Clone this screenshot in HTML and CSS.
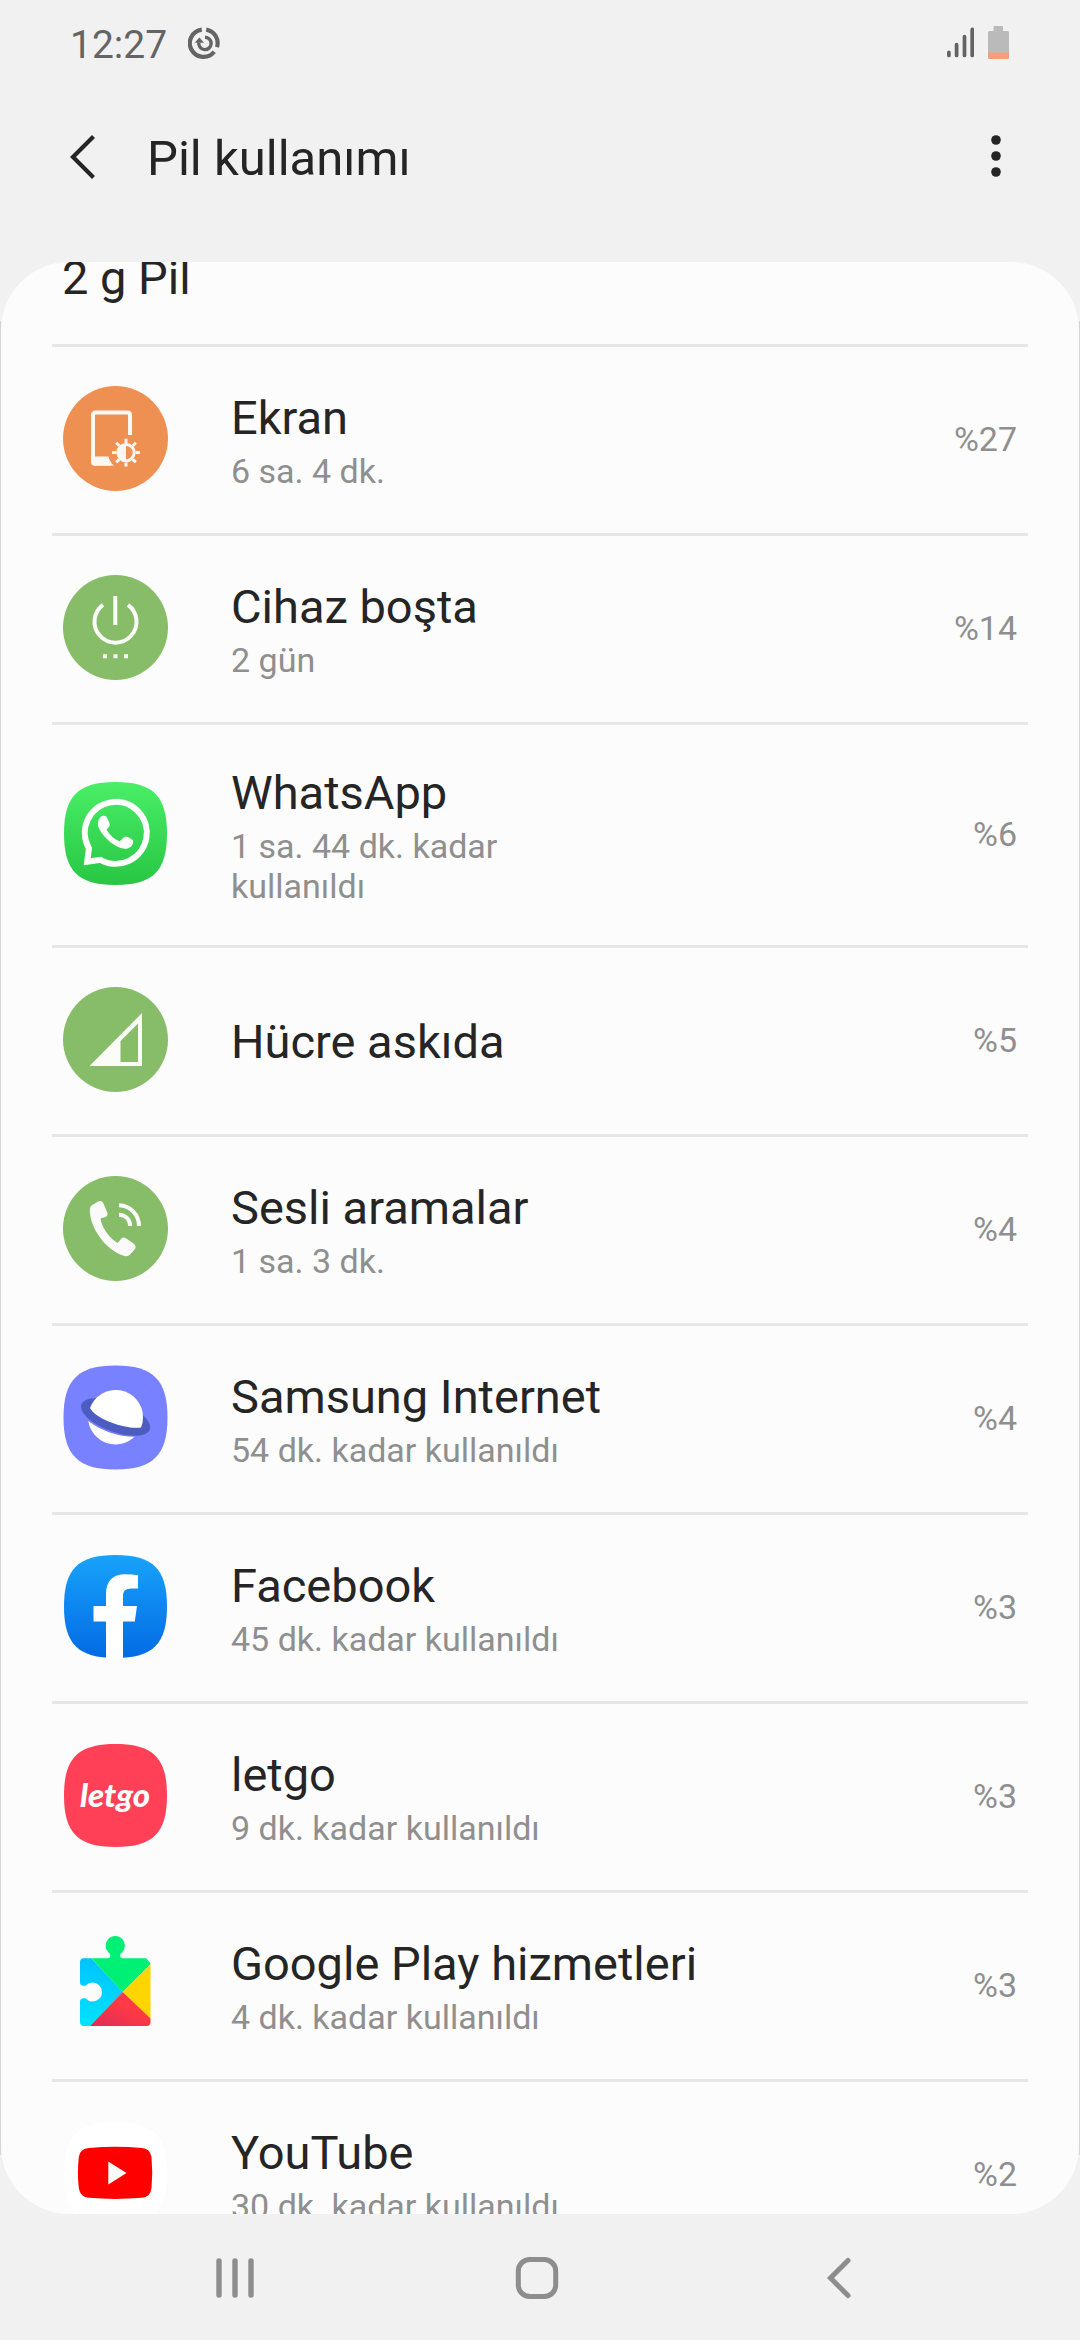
FILE: index.html
```html
<!DOCTYPE html>
<html lang="tr">
<head>
<meta charset="utf-8">
<title>Pil kullanımı</title>
<link rel="stylesheet" href="styles.css">
</head>
<body>
<div class="screen">
  <header class="status">
    <span class="clock">12:27</span>
    <svg class="status-sync" width="32" height="34" viewBox="0 0 32 34" fill="none" stroke="#646464" stroke-width="4.2">
      <path d="M18.2 2.6A13.7 13.7 0 0 1 29 20.2M26.2 24.8A13.7 13.7 0 1 1 13.8 2.6"/>
      <path d="M17 10.2A6.2 6.2 0 1 1 10.8 15.5" stroke-width="3.4"/>
      <path d="M6.8 15.8L11.4 10.4L16 15.8Z" fill="#646464" stroke="none"/>
    </svg>
    <svg class="signal" width="27" height="32" viewBox="0 0 27 32" stroke="#636363" stroke-width="3.7" stroke-linecap="round">
      <path d="M1.9 25.4V28.4M9.6 17.5V28.4M17.5 9.5V28.4M25.2 2.4V28.4"/>
    </svg>
    <svg class="battery" width="21" height="34" viewBox="0 0 21 34">
      <path d="M6.6 0H14.2Q15 0 15 1V5H19.5Q21 5 21 6.5V27H0V6.5Q0 5 1.5 5H5.6V1Q5.6 0 6.6 0Z" fill="#bababa"/>
      <path d="M0 26.5H21V31.5Q21 33 19.5 33H1.5Q0 33 0 31.5Z" fill="#f99b7d"/>
    </svg>
  </header>
  <div class="appbar">
    <svg class="back" width="26" height="44" viewBox="0 0 26 44" fill="none" stroke="#252525" stroke-width="4.2"><path d="M23.5 1.5L3 22L23.5 42.5"/></svg>
    <h1>Pil kullanımı</h1>
    <svg class="more" width="10" height="44" viewBox="0 0 10 44" fill="#252525"><circle cx="5" cy="6" r="4.8"/><circle cx="5" cy="22" r="4.8"/><circle cx="5" cy="38" r="4.8"/></svg>
  </div>
  <main class="content">
    <div class="card">
      <h2>2 g Pil</h2>
      <ul>
        <li class="row">
          <svg class="icon" viewBox="0 0 105 105">
            <circle cx="52.5" cy="52.5" r="52.5" fill="#ef9053"/>
            <path d="M67 49V29Q67 26.4 64.4 26.4H32.6Q30 26.4 30 29V76Q30 77.7 32 77.7H48" fill="none" stroke="#fbf7f3" stroke-width="4"/>
            <path d="M30 70.5H45.5Q46.5 76 51 79.6H32Q30 79.6 30 77Z" fill="#fbf7f3"/>
            <circle cx="63" cy="66.6" r="8.2" fill="none" stroke="#fbf7f3" stroke-width="3"/>
            <path d="M63 58.4A8.2 8.2 0 0 0 63 74.8Z" fill="#fbf7f3"/>
            <path d="M63 52.8V57M63 76.4V80.6M49.1 66.6H53.3M72.7 66.6H76.9M53.2 56.8L56.2 59.8M69.8 73.4L72.8 76.4M72.8 56.8L69.8 59.8M56.2 73.4L53.2 76.4" stroke="#fbf7f3" stroke-width="3"/>
          </svg>
          <div class="text"><h3>Ekran</h3><p>6 sa. 4 dk.</p></div><span class="pct">%27</span>
        </li>
        <li class="row">
          <svg class="icon" viewBox="0 0 105 105">
            <circle cx="52.5" cy="52.5" r="52.5" fill="#87bd68"/>
            <path d="M52.3 21V50M40 29.8A21 21 0 1 0 65 29.8" fill="none" stroke="#fafcf8" stroke-width="4"/>
            <path d="M40 79.2H44V83.2H40ZM50.5 79.2H54.5V83.2H50.5ZM61 79.2H65V83.2H61Z" fill="#fafcf8"/>
          </svg>
          <div class="text"><h3>Cihaz boşta</h3><p>2 gün</p></div><span class="pct">%14</span>
        </li>
        <li class="row">
          <svg class="icon" viewBox="0 0 105 105">
            <defs><linearGradient id="wa" x1="0" y1="0" x2="0" y2="1"><stop offset="0" stop-color="#49ee66"/><stop offset="1" stop-color="#28c644"/></linearGradient></defs>
            <path d="M52.5 1C90 1 104 15 104 52.5S90 104 52.5 104S1 90 1 52.5S15 1 52.5 1Z" fill="url(#wa)"/>
            <path d="M26 67.4A31 31 0 1 1 37.5 78.8L24.2 80.8Z" fill="none" stroke="#fff" stroke-width="6"/>
            <path d="M37 36.5C38.5 34.5 42 34.3 43.3 35.6C44.8 38 46.5 41.5 46.8 44C46.5 46.5 44 47 43.7 49C47 54.5 51.5 58.5 56.5 60.2C58.5 59.5 60.5 56 62.3 55.600C65 56 69.500 58.200 70.200 60.200C70.300 64.500 66.500 67.700 62 67.800C52 67 38 55 35 44.500C34.600 41.500 35.400 38.500 37 36.500Z" fill="#fff"/>
          </svg>
          <div class="text"><h3>WhatsApp</h3><p>1 sa. 44 dk. kadar kullanıldı</p></div><span class="pct">%6</span>
        </li>
        <li class="row">
          <svg class="icon" viewBox="0 0 105 105">
            <circle cx="52.5" cy="52.5" r="52.5" fill="#87bd68"/>
            <path d="M79 26V79H26.5ZM75 36.5L57.5 54V75H75Z" fill="#fafcf8" fill-rule="evenodd"/>
          </svg>
          <div class="text"><h3>Hücre askıda</h3></div><span class="pct">%5</span>
        </li>
        <li class="row">
          <svg class="icon" viewBox="0 0 105 105">
            <circle cx="52.5" cy="52.5" r="52.5" fill="#87bd68"/>
            <path d="M28.5 29.5L35.5 25.3Q38.6 24 40.2 27L44.3 36.5Q45.2 39.8 42.5 41L37.5 42.5C38.5 50.5 46 62 54.5 67L58.5 62.5Q60 60.8 62.5 62L70.5 67.5Q73.8 70 72 73L66.5 79Q63.5 81 60 79.6C42 73.5 26.5 51 26.8 33.5Q27 30.5 28.5 29.5Z" fill="#fafafa"/>
            <path d="M56 29.3C67.5 29.8 76 38.5 76 50M56 38.7C62.5 39 66.9 43.5 67.2 50" fill="none" stroke="#fafafa" stroke-width="4"/>
          </svg>
          <div class="text"><h3>Sesli aramalar</h3><p>1 sa. 3 dk.</p></div><span class="pct">%4</span>
        </li>
        <li class="row">
          <svg class="icon" viewBox="0 0 105 105">
            <path d="M52.5 .5C90 .5 104.5 15 104.5 52.5S90 104.5 52.5 104.5S.5 90 .5 52.5S15 .5 52.5 .5Z" fill="#7881ff"/>
            <ellipse cx="52.6" cy="52" rx="36.5" ry="15" transform="rotate(20 52.6 52)" fill="#4c5cc0"/>
            <path d="M27 43A27.3 27.3 0 0 1 80 52Q80 58.5 78 62.5C64 65 32 54 27 43Z" fill="#fff"/>
            <path d="M25.3 56C37 65.5 56 72 71.5 71.8A27.5 27.5 0 0 1 25.3 56Z" fill="#fff"/>
          </svg>
          <div class="text"><h3>Samsung Internet</h3><p>54 dk. kadar kullanıldı</p></div><span class="pct">%4</span>
        </li>
        <li class="row">
          <svg class="icon" viewBox="0 0 105 105">
            <defs><linearGradient id="fb" x1="0" y1="0" x2="0" y2="1"><stop offset="0" stop-color="#18a3fb"/><stop offset="1" stop-color="#036ae4"/></linearGradient></defs>
            <path d="M52.5 1C90 1 104 15 104 52.5S90 104 52.5 104S1 90 1 52.5S15 1 52.5 1Z" fill="url(#fb)"/>
            <path d="M43 104.5V67.5H30.5V52H43V40C43 27 50 20.3 62 20.3Q69 20.3 75 21.2V34.5H68.5C62 34.5 60 37.5 60 42V52H74L71.8 67.5H60V104.5Z" fill="#fff"/>
          </svg>
          <div class="text"><h3>Facebook</h3><p>45 dk. kadar kullanıldı</p></div><span class="pct">%3</span>
        </li>
        <li class="row">
          <svg class="icon" viewBox="0 0 105 105">
            <path d="M52.5 1C90 1 104 15 104 52.5S90 104 52.5 104S1 90 1 52.5S15 1 52.5 1Z" fill="#ff4056"/>
            <text class="wordmark" x="17" y="63.5" textLength="70" lengthAdjust="spacingAndGlyphs">letgo</text>
          </svg>
          <div class="text"><h3>letgo</h3><p>9 dk. kadar kullanıldı</p></div><span class="pct">%3</span>
        </li>
        <li class="row">
          <svg class="icon" viewBox="0 0 105 105">
            <defs>
              <clipPath id="puzzle"><path d="M21 26.3H44.5Q48.5 26 46.8 21.5A9.6 9.6 0 1 1 57.7 21.5Q56 26 60 26.3H83.500Q87.500 26.300 87.500 30.300V90Q87.500 94 83.500 94H21Q17 94 17 90V69.500Q17 65.500 22.500 66.300A9.500 9.500 0 1 0 22.500 53.700Q17 54.500 17 50.500V30.300Q17 26.300 21 26.300Z"/></clipPath>
              <linearGradient id="gb" x1="0" y1="0" x2="0" y2="1"><stop offset="0" stop-color="#00c3ff"/><stop offset="1" stop-color="#00e2ff"/></linearGradient>
              <linearGradient id="gr" x1="1" y1="0" x2="0" y2="1"><stop offset=".4" stop-color="#ff3a44"/><stop offset="1" stop-color="#db2a5b"/></linearGradient>
            </defs>
            <g clip-path="url(#puzzle)">
              <path d="M16 26H28L60 60L26 95H16Z" fill="url(#gb)"/>
              <path d="M28 26L42 0H62L88 32L59.700 60Z" fill="#00f076"/>
              <path d="M88 32L59.700 60L88 87.500Z" fill="#ffd500"/>
              <path d="M26 95L59.700 60L88 87V95Z" fill="url(#gr)"/>
            </g>
          </svg>
          <div class="text"><h3>Google Play hizmetleri</h3><p>4 dk. kadar kullanıldı</p></div><span class="pct">%3</span>
        </li>
        <li class="row">
          <svg class="icon" viewBox="0 0 105 105">
            <path d="M52.5 1C90 1 104 15 104 52.5S90 104 52.5 104S1 90 1 52.5S15 1 52.5 1Z" fill="#fff"/>
            <path d="M26 27Q52 24.5 79 27Q87 27.5 88.5 36Q90 52 88.5 67Q87.5 76 79 76.8Q52 79 26 76.8Q17 76 15.8 67Q14 52 15.8 36Q17 27.5 26 27Z" fill="#f00"/>
            <path d="M45.3 40.5L63.5 52L45.3 63.5Z" fill="#fff"/>
          </svg>
          <div class="text"><h3>YouTube</h3><p>30 dk. kadar kullanıldı</p></div><span class="pct">%2</span>
        </li>
      </ul>
    </div>
  </main>
  <nav class="navbar">
    <svg width="40" height="44" viewBox="0 0 40 44" stroke="#8d8d8d" stroke-width="5.4" stroke-linecap="round"><path d="M4 5V39M20 5V39M36 5V39"/></svg>
    <svg class="home" width="44" height="44" viewBox="0 0 44 44" fill="none" stroke="#8d8d8d" stroke-width="5"><rect x="3.3" y="3.5" width="37.4" height="37" rx="11.5"/></svg>
    <svg width="26" height="44" viewBox="0 0 26 44" fill="none" stroke="#8d8d8d" stroke-width="5" stroke-linecap="round"><path d="M22 4.5L4.5 22L22 39.5"/></svg>
  </nav>
</div>
</body>
</html>
```
FILE: styles.css
```css
* { box-sizing: border-box; margin: 0; padding: 0; }
body { background: #f1f1f1; font-family: Roboto, "Liberation Sans", sans-serif; color: #252525; }
h1, h2, h3 { font-weight: 400; }
svg { display: block; flex: none; }
ul { list-style: none; }

.screen { width: 1080px; height: 2340px; display: flex; flex-direction: column; overflow: hidden; }

.status { height: 88px; padding: 26px 71px 0 70px; display: flex; align-items: flex-start; color: #646464; }
.clock { font-size: 39px; line-height: 46px; margin-top: -4px; width: 118px; }
.status-sync { margin-top: 1px; }
.signal { margin-left: auto; margin-top: 1px; margin-right: 14px; }

.appbar { height: 174px; padding: 0 79px 0 70px; display: flex; align-items: flex-start; }
.back { margin-top: 51px; }
.appbar h1 { font-size: 49px; line-height: 60px; margin: 41px 0 0 51px; }
.more { margin: 46px 0 0 auto; }
.back { margin-top: 47px; }

.content {
  height: 1952px;
  padding: 0 1px;
  background:
    linear-gradient(#d4d4d4, #d4d4d4) left center / 1px 1834px no-repeat,
    linear-gradient(#d4d4d4, #d4d4d4) right center / 1px 1834px no-repeat;
}
.card { height: 100%; padding: 0 51px; background: #fcfcfc; border-radius: 68px; overflow: hidden; }
.card h2 { height: 94px; margin-top: -12px; padding-left: 10px; font-size: 47px; line-height: 56px; }

.row { min-height: 189px; padding: 36px 11px 39px; border-top: 3px solid #e6e6e6; display: flex; align-items: center; }
.icon { width: 105px; height: 105px; margin-right: 63px; }
.wordmark { font: italic 900 33px Lato, "Liberation Sans", sans-serif; fill: #fff; }
.text { width: 480px; padding-top: 4px; }
.text h3 { font-size: 47px; line-height: 55px; white-space: nowrap; }
.text p { font-size: 34px; line-height: 40px; margin-top: 6px; color: #8f8f8f; max-width: 350px; }
.pct { margin-left: auto; font-size: 34px; line-height: 40px; color: #8f8f8f; }

.navbar { flex: 1; padding: 42px 0 0 215px; display: flex; align-items: flex-start; }
.home { margin: 0 267px 0 260px; }
```
